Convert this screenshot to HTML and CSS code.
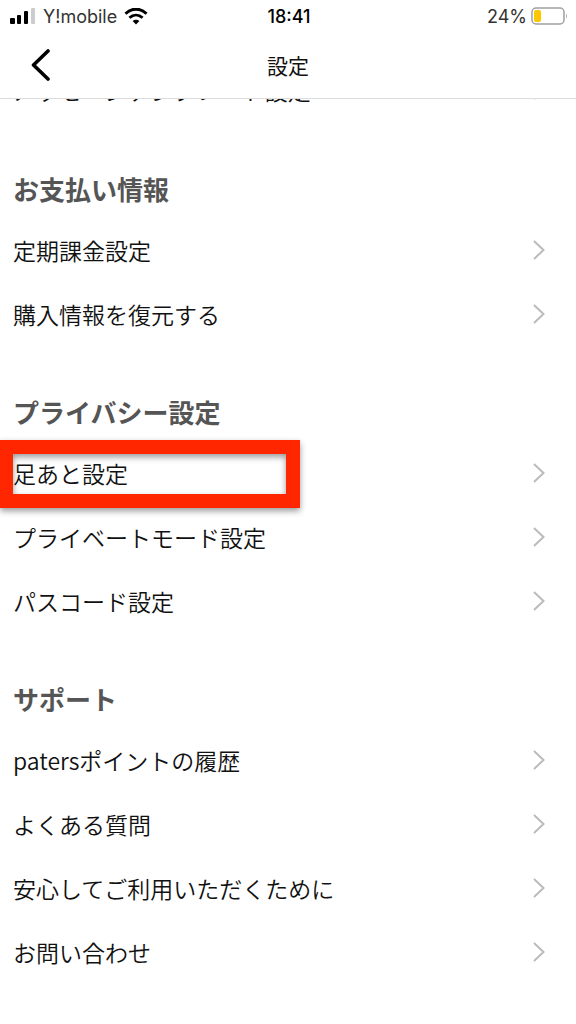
FILE: index.html
```html
<!DOCTYPE html>
<html lang="ja">
<head>
  <meta charset="utf-8">
  <meta name="viewport" content="width=device-width, initial-scale=1">
  <title>設定</title>
  <link rel="stylesheet" href="styles.css">
</head>

<body>

  <header class="header">
    <div class="statusBar">
      <div class="carrier">
        <svg class="signal" width="26" height="17" viewBox="0 0 26 17">
          <rect x="0" y="10" width="5" height="6" rx="1"/>
          <rect x="7" y="7" width="4" height="9" rx="1"/>
          <rect x="14" y="3" width="4" height="13" rx="1"/>
          <rect x="21" y="0" width="4" height="16" rx="1" fill="#cccccc"/>
        </svg>
        <span>Y!mobile</span>
        <svg class="wifi" width="24" height="17" viewBox="0 0 24 17">
          <path d="M1.5 5.8C7.5 -0.4 16.5 -0.4 22.5 5.8" fill="none" stroke="#000" stroke-width="3"/>
          <path d="M5.4 9.8C9.4 6.1 14.6 6.1 18.6 9.8" fill="none" stroke="#000" stroke-width="2.8"/>
          <path d="M8.6 13C10.6 11.3 13.4 11.3 15.4 13L12 16.5Z"/>
        </svg>
      </div>
      <div class="time">18:41</div>
      <div class="battery">
        <span>24%</span>
        <svg width="37" height="18" viewBox="0 0 37 18">
          <rect x="1" y="1" width="32" height="16" rx="4" fill="none" stroke="#a0a0a0" stroke-width="1.5"/>
          <rect x="3" y="3" width="7" height="12" rx="2" fill="#fdc700"/>
          <path d="M35 6Q36.8 9 35 12Z" fill="#a0a0a0"/>
        </svg>
      </div>
    </div>
    <div class="navBar">
      <button class="backButton" type="button" aria-label="戻る">
        <svg width="20" height="32" viewBox="0 0 20 32">
          <path d="M18 2L3.5 16L18 30" fill="none" stroke="#000" stroke-width="3.6" stroke-linecap="round" stroke-linejoin="round"/>
        </svg>
      </button>
      <h1>設定</h1>
    </div>
  </header>

  <svg class="defs" width="0" height="0">
    <symbol id="chevron" viewBox="0 0 12 20">
      <path d="M1 1L10.5 10L1 19" fill="none" stroke="#bbbbbb" stroke-width="2"/>
    </symbol>
  </svg>

  <main class="settings">
    <section class="scrolled">
      <a class="row" href="#template">メッセージテンプレート設定<svg class="chevron"><use href="#chevron"/></svg></a>
    </section>

    <section>
      <h2>お支払い情報</h2>
      <a class="row" href="#billing">定期課金設定<svg class="chevron"><use href="#chevron"/></svg></a>
      <a class="row" href="#restore">購入情報を復元する<svg class="chevron"><use href="#chevron"/></svg></a>
    </section>

    <section>
      <h2>プライバシー設定</h2>
      <a class="row marked" href="#footprint">足あと設定<svg class="chevron"><use href="#chevron"/></svg></a>
      <a class="row" href="#private">プライベートモード設定<svg class="chevron"><use href="#chevron"/></svg></a>
      <a class="row" href="#passcode">パスコード設定<svg class="chevron"><use href="#chevron"/></svg></a>
    </section>

    <section>
      <h2>サポート</h2>
      <a class="row" href="#points">patersポイントの履歴<svg class="chevron"><use href="#chevron"/></svg></a>
      <a class="row" href="#faq">よくある質問<svg class="chevron"><use href="#chevron"/></svg></a>
      <a class="row" href="#safety">安心してご利用いただくために<svg class="chevron"><use href="#chevron"/></svg></a>
      <a class="row" href="#contact">お問い合わせ<svg class="chevron"><use href="#chevron"/></svg></a>
    </section>
  </main>

</body>
</html>
```
FILE: styles.css
```css
body {
  margin: 0;
  background-color: #fff;
  color: #111;
  font-family: "Noto Sans CJK JP", sans-serif;
}

.header {
  position: sticky;
  top: 0;
  z-index: 2;
  background-color: #fff;
  border-bottom: 1px solid #dcdcdc;
}

.statusBar {
  display: grid;
  grid-template-columns: 1fr auto 1fr;
  align-items: center;
  height: 32px;
  padding: 0 8px 0 10px;
  font-family: Inter, sans-serif;
  font-size: 18px;
  color: #333;
}

.carrier, .battery {
  display: flex;
  align-items: center;
}
.carrier {
  gap: 7px;
}
.battery {
  justify-content: flex-end;
  gap: 4px;
}

.time {
  font-weight: 500;
  color: #000;
}

.navBar {
  display: grid;
  grid-template-columns: 1fr auto 1fr;
  align-items: center;
  height: 66px;
}

.backButton {
  justify-self: start;
  display: flex;
  margin-left: 20px;
  padding: 0 10px;
  border: none;
  background: none;
  cursor: pointer;
}

h1 {
  margin: 0;
  font-size: 21px;
  font-weight: 400;
  line-height: 32px;
}

.defs {
  position: absolute;
}

.settings {
  overflow: hidden;
}

/* list is scrolled a little under the header */
.scrolled {
  margin-top: -41px;
}

section {
  margin-bottom: 49px;
}

h2 {
  margin: 0;
  padding: 0 13px 11px;
  color: #555;
  font-size: 26px;
  font-weight: 700;
  line-height: 36px;
}

.row {
  display: flex;
  align-items: center;
  justify-content: space-between;
  height: 64px;
  padding: 0 31px 0 13px;
  color: #111;
  font-size: 23px;
  font-weight: 350;
  text-decoration: none;
}

h2 ~ .row:last-child {
  margin-bottom: -1px;
}

.chevron {
  width: 12px;
  height: 20px;
}

.marked {
  position: relative;
}
.marked::after {
  content: "";
  position: absolute;
  top: -1px;
  left: 0;
  box-sizing: border-box;
  width: 300px;
  height: 68px;
  border: 14px solid #ff2600;
  border-left-width: 13px;
  filter: drop-shadow(0 3px 3px rgba(0,0,0,0.4));
}
```
